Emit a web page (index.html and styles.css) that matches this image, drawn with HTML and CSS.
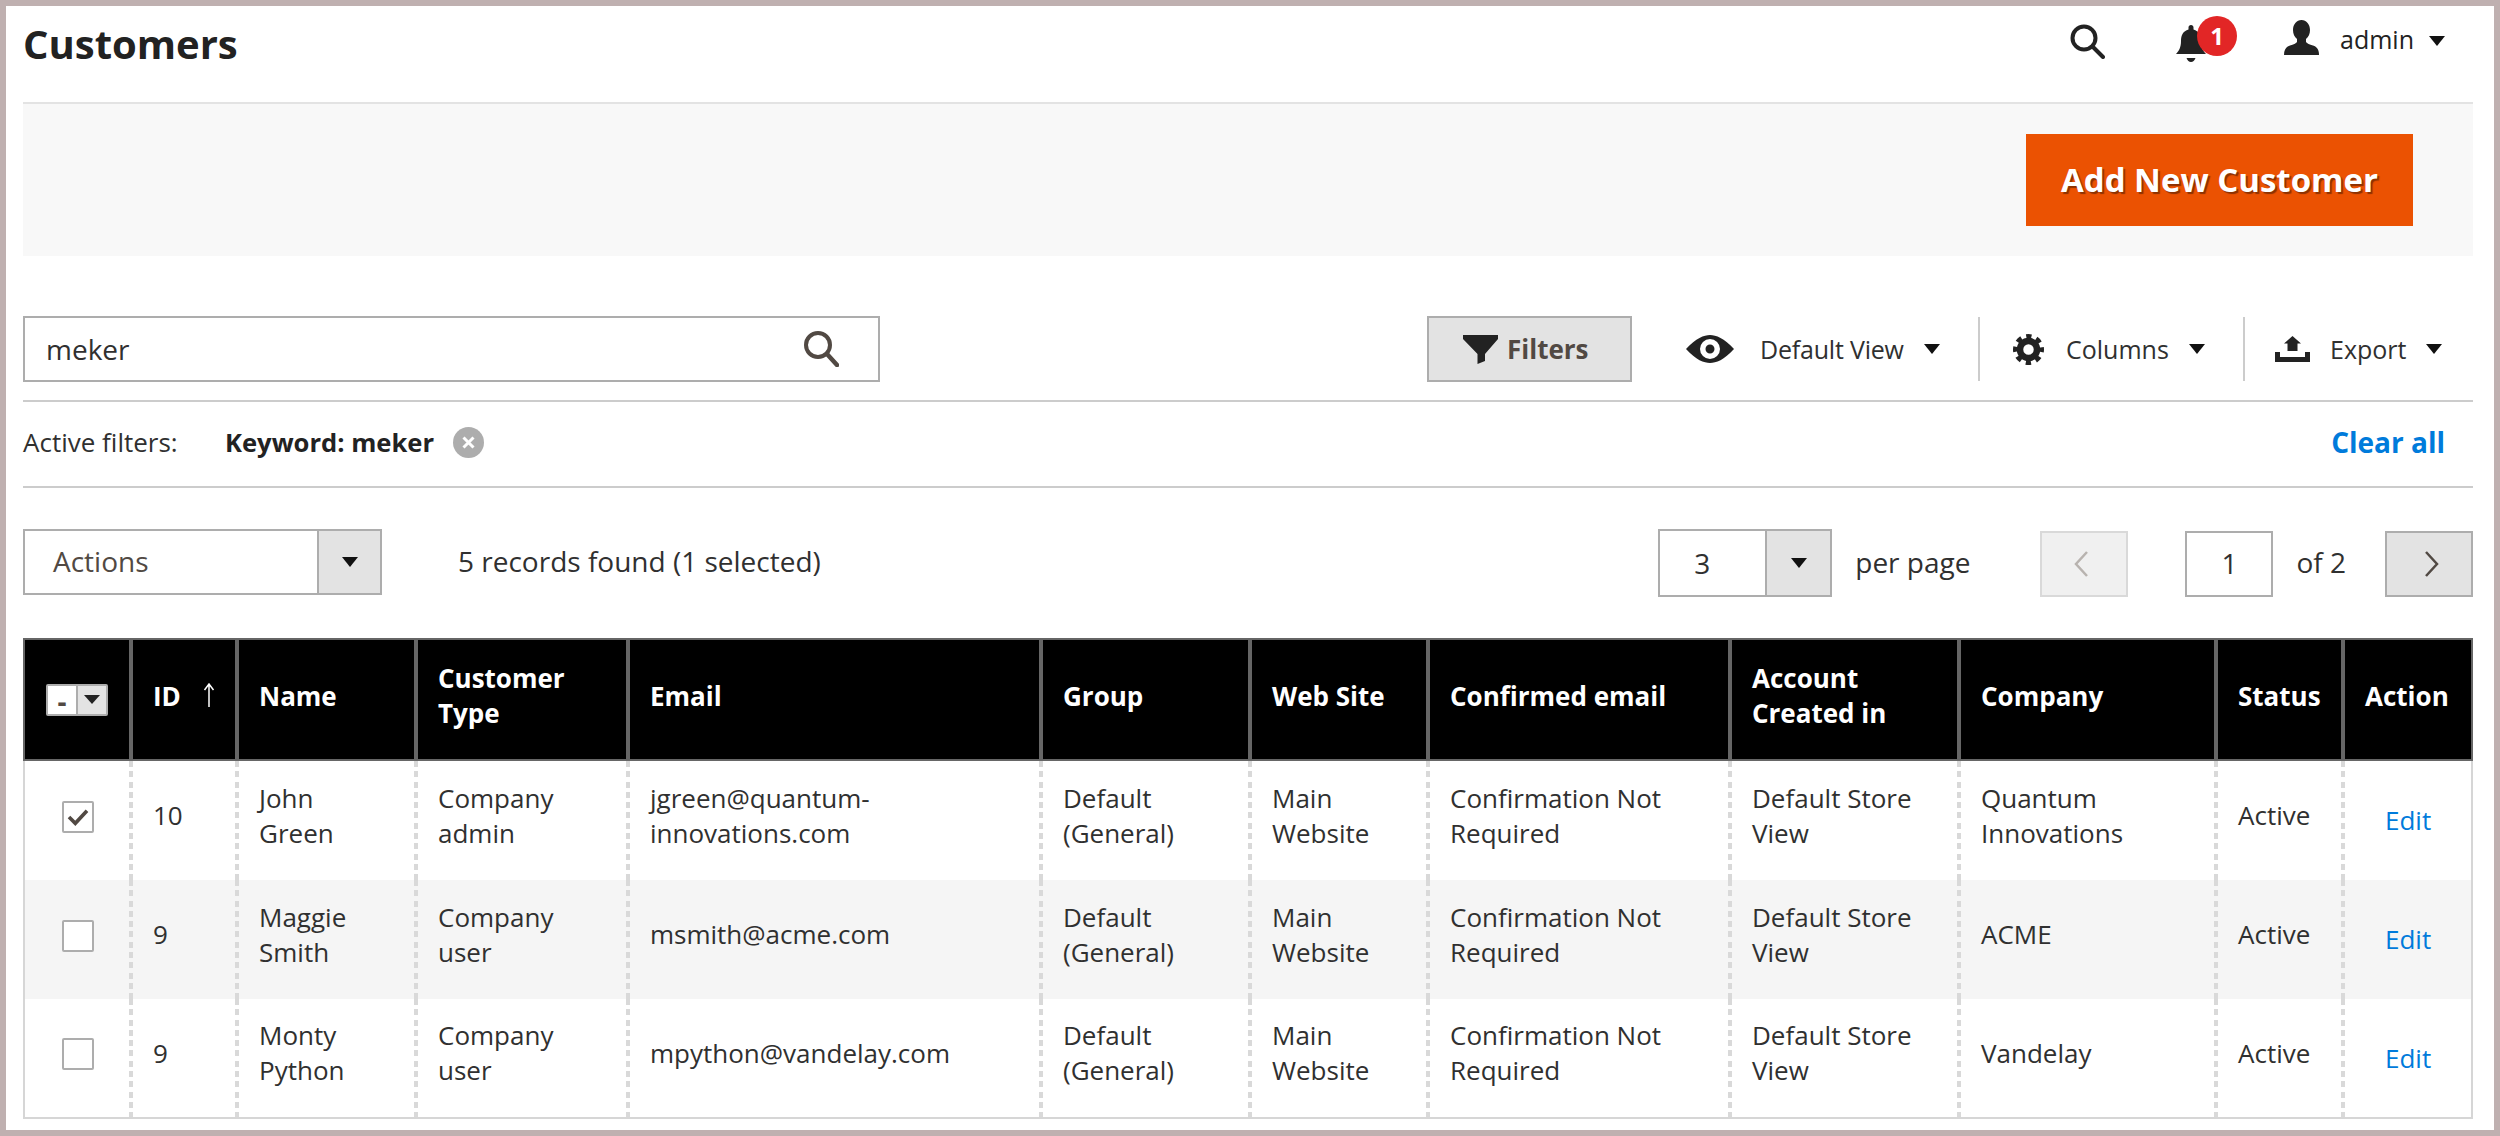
FILE: index.html
```html
<!DOCTYPE html>
<html lang="en">
<head>
    <meta charset="UTF-8">
    <title>Customers</title>
    <link rel="stylesheet" href="styles.css">
</head>
<body>
<div class="frame">
    <header class="page-header">
        <h1>Customers</h1>
        <svg class="top-search" viewBox="0 0 35 35"><circle cx="14" cy="14" r="11.5" fill="none" stroke="#222" stroke-width="4"/><path d="M22.5 22.5 33 33" stroke="#222" stroke-width="4" stroke-linecap="round"/></svg>
        <div class="bell">
            <svg viewBox="0 0 30 37"><path fill="#222" d="M15 0c1.500 0 2.500 1 2.500 2.600V4.500C23 6 25 10.500 25 16c0 6 2 10 5 13H0c3-3 5-7 5-13C5 10.500 7 6 12.500 4.500V2.600C12.500 1 13.500 0 15 0zM10.500 33h9c-1 2.500-2.500 4-4.500 4s-3.500-1.500-4.500-4z"/></svg>
            <span class="badge">1</span>
        </div>
        <svg class="user" viewBox="0 0 35 35"><path fill="#222" d="M17.500 0c5 0 8.500 4.500 8.500 10 0 4-1.500 7-4 9v3c1 1.500 3.500 2.500 7 3.500 4 1.500 6 4 6 9.500H0c0-5.500 2-8 6-9.500 3.500-1 6-2 7-3.500v-3c-2.500-2-4-5-4-9 0-5.500 3.500-10 8.500-10z"/></svg>
        <span class="admin">admin</span>
        <span class="caret"></span>
    </header>

    <div class="page-actions">
        <button class="add-btn" type="button">Add New Customer</button>
    </div>

    <div class="toolbar">
        <div class="search-box">
            <span>meker</span>
            <svg viewBox="0 0 36 36"><circle cx="15" cy="14" r="12" fill="none" stroke="#514943" stroke-width="4"/><path d="M24 23 34 34" stroke="#514943" stroke-width="4.500" stroke-linecap="round"/></svg>
        </div>
        <button class="filters-btn" type="button">
            <svg viewBox="0 0 35 29"><path fill="#222" d="M0 0H35V4L22 19V26L14.500 29V19L0 4Z"/></svg>
            Filters
        </button>
        <div class="tool tool-view">
            <svg class="icon-eye" viewBox="0 0 48 28"><path fill="#222" fill-rule="evenodd" d="M0 14C10 3 18 0 24 0s14 3 24 14C38 25 30 28 24 28S10 25 0 14zM24 4a10 10 0 1 0 0 20 10 10 0 0 0 0-20zm0 5.500a4.500 4.500 0 1 1 0 9 4.500 4.500 0 0 1 0-9z"/></svg>
            <span class="view-name">Default View</span>
            <span class="caret"></span>
        </div>
        <div class="tool tool-columns">
            <svg class="icon-gear" viewBox="0 0 31 31"><circle cx="15.500" cy="15.500" r="8.500" fill="none" stroke="#222" stroke-width="6.500"/><circle cx="15.500" cy="15.500" r="13" fill="none" stroke="#222" stroke-width="5" stroke-dasharray="5.200 5" stroke-dashoffset="2.600"/></svg>
            <span>Columns</span>
            <span class="caret"></span>
        </div>
        <div class="tool tool-export">
            <svg class="icon-export" viewBox="0 0 35 26"><path fill="#222" d="M17.500 0 26 7.500H22.500V15H12.500V7.500H9ZM0 16H5V21H30V16H35V26H0Z"/></svg>
            <span>Export</span>
            <span class="caret"></span>
        </div>
    </div>

    <div class="active-filters">
        <span class="af-label">Active filters:</span>
        <strong class="af-keyword">Keyword: meker</strong>
        <svg class="af-remove" viewBox="0 0 31 31"><circle cx="15.500" cy="15.500" r="15.500" fill="#adadad"/><path d="M10.500 10.500l10 10m0-10-10 10" stroke="#fff" stroke-width="3"/></svg>
        <a class="clear-all" href="#">Clear all</a>
    </div>

    <div class="pager-row">
        <div class="select actions-select">
            <span class="select-value">Actions</span>
            <span class="select-arrow"><span class="caret dark"></span></span>
        </div>
        <span class="records">5 records found (1 selected)</span>
        <div class="select per-page-select">
            <span class="select-value">3</span>
            <span class="select-arrow"><span class="caret dark"></span></span>
        </div>
        <span class="per-page">per page</span>
        <button class="page-btn prev" type="button"><svg viewBox="0 0 16 26"><path d="M14 1 3 13l11 12" fill="none" stroke="#b8b3af" stroke-width="2.500"/></svg></button>
        <span class="page-input">1</span>
        <span class="of-pages">of 2</span>
        <button class="page-btn next" type="button"><svg viewBox="0 0 16 26"><path d="M2 1l11 12L2 25" fill="none" stroke="#514943" stroke-width="2.500"/></svg></button>
    </div>

    <table class="grid">
        <colgroup>
            <col class="c-check"><col class="c-id"><col class="c-name"><col class="c-type"><col class="c-email"><col class="c-group"><col class="c-site"><col class="c-conf"><col class="c-acct"><col class="c-company"><col class="c-status"><col class="c-action">
        </colgroup>
        <thead>
            <tr>
                <th><span class="mass-select"><span class="mass-dash">-</span><span class="mass-arrow"><span class="caret small"></span></span></span></th>
                <th><span class="id-head">ID <svg class="sort-arrow" viewBox="0 0 12 24"><path d="M6 24V2M1.500 7 6 1l4.500 6" fill="none" stroke="#fff" stroke-width="1.500"/></svg></span></th>
                <th>Name</th>
                <th>Customer<br>Type</th>
                <th>Email</th>
                <th>Group</th>
                <th>Web Site</th>
                <th>Confirmed email</th>
                <th>Account<br>Created in</th>
                <th>Company</th>
                <th>Status</th>
                <th>Action</th>
            </tr>
        </thead>
        <tbody>
            <tr>
                <td><span class="check checked"><svg viewBox="0 0 24 20"><path d="M2 10l7 7L22 3" fill="none" stroke="#514943" stroke-width="4"/></svg></span></td>
                <td>10</td>
                <td>John<br>Green</td>
                <td>Company<br>admin</td>
                <td>jgreen@quantum-<br>innovations.com</td>
                <td>Default<br>(General)</td>
                <td>Main<br>Website</td>
                <td>Confirmation Not<br>Required</td>
                <td>Default Store<br>View</td>
                <td>Quantum<br>Innovations</td>
                <td>Active</td>
                <td><a class="edit" href="#">Edit</a></td>
            </tr>
            <tr>
                <td><span class="check"></span></td>
                <td>9</td>
                <td>Maggie<br>Smith</td>
                <td>Company<br>user</td>
                <td>msmith@acme.com</td>
                <td>Default<br>(General)</td>
                <td>Main<br>Website</td>
                <td>Confirmation Not<br>Required</td>
                <td>Default Store<br>View</td>
                <td>ACME</td>
                <td>Active</td>
                <td><a class="edit" href="#">Edit</a></td>
            </tr>
            <tr>
                <td><span class="check"></span></td>
                <td>9</td>
                <td>Monty<br>Python</td>
                <td>Company<br>user</td>
                <td>mpython@vandelay.com</td>
                <td>Default<br>(General)</td>
                <td>Main<br>Website</td>
                <td>Confirmation Not<br>Required</td>
                <td>Default Store<br>View</td>
                <td>Vandelay</td>
                <td>Active</td>
                <td><a class="edit" href="#">Edit</a></td>
            </tr>
        </tbody>
    </table>
</div>
</body>
</html>
```

FILE: styles.css
```css
* {
    box-sizing: border-box;
}
html, body {
    margin: 0;
    height: 1136px;
    overflow: hidden;
}
body {
    font-family: "Open Sans", "Liberation Sans", sans-serif;
    font-size: 28px;
    color: #303030;
    background-color: #fff;
}
svg {
    display: block;
    flex: none;
}
button {
    font-family: inherit;
    border-radius: 0;
    padding: 0;
}
.frame {
    height: 1136px;
    border: 6px solid #bfb0b0;
    padding: 0 21px 0 17px;
}
.caret {
    display: block;
    flex: none;
    width: 0;
    height: 0;
    border-style: solid;
    border-width: 10px 8px 0;
    border-color: #111 transparent transparent;
}
.caret.small {
    border-width: 9px 8px 0;
    border-color: #222 transparent transparent;
}

/* header */
.page-header {
    display: flex;
    align-items: center;
    height: 98px;
    border-bottom: 2px solid #e3e3e3;
}
.page-header h1 {
    margin: 0 auto 20px 0;
    font-size: 40px;
    font-weight: 700;
    line-height: 52px;
    color: #222;
}
.top-search {
    width: 35px;
    height: 35px;
    margin: -26px 71px 0 0;
}
.bell {
    position: relative;
    width: 30px;
    height: 37px;
    margin: -22px 78px 0 0;
}
.bell svg {
    width: 30px;
    height: 37px;
}
.badge {
    position: absolute;
    left: 21px;
    top: -9px;
    width: 40px;
    height: 40px;
    border-radius: 50%;
    background-color: #e22626;
    color: #fff;
    font-size: 24px;
    font-weight: 700;
    line-height: 40px;
    text-align: center;
}
.user {
    width: 35px;
    height: 35px;
    margin: -33px 21px 0 0;
}
.admin {
    margin: -31px 15px 0 0;
    font-size: 25px;
    line-height: 36px;
    color: #222;
}
.page-header .caret {
    margin: -26px 28px 0 0;
}

/* orange button panel */
.page-actions {
    display: flex;
    justify-content: flex-end;
    align-items: center;
    height: 152px;
    padding-right: 60px;
    background-color: #f8f8f8;
}
.add-btn {
    width: 387px;
    height: 92px;
    padding-bottom: 2px;
    border: none;
    background-color: #eb5202;
    color: #fff;
    font-size: 33px;
    font-weight: 700;
    text-shadow: 2px 2px 1px rgba(0, 0, 0, 0.4);
}

/* search and view tools */
.toolbar {
    display: flex;
    align-items: center;
    height: 86px;
    margin-top: 60px;
    padding-bottom: 18px;
    border-bottom: 2px solid #ccc;
}
.search-box {
    display: flex;
    align-items: center;
    justify-content: space-between;
    width: 857px;
    height: 66px;
    padding: 0 39px 0 21px;
    border: 2px solid #adadad;
    font-size: 28px;
}
.search-box svg {
    width: 36px;
    height: 36px;
}
.filters-btn {
    display: flex;
    align-items: center;
    width: 205px;
    height: 66px;
    margin-left: 547px;
    padding-left: 34px;
    border: 2px solid #adadad;
    background-color: #e3e3e3;
    color: #514943;
    font-size: 26px;
    font-weight: 700;
}
.filters-btn svg {
    width: 35px;
    height: 29px;
    margin-right: 9px;
}
.tool {
    display: flex;
    align-items: center;
    height: 64px;
    font-size: 25px;
    color: #303030;
}
.tool-view {
    width: 348px;
    padding-left: 54px;
    border-right: 2px solid #ccc;
}
.view-name {
    letter-spacing: -0.2px;
}
.tool-columns {
    width: 265px;
    padding-left: 33px;
    border-right: 2px solid #ccc;
}
.tool-export {
    padding-left: 30px;
}
.tool .caret {
    margin-left: 20px;
}
.icon-eye {
    width: 48px;
    height: 28px;
    margin-right: 26px;
}
.icon-gear {
    width: 31px;
    height: 31px;
    margin-right: 22px;
}
.icon-export {
    width: 35px;
    height: 26px;
    margin-right: 20px;
}

/* active filters */
.active-filters {
    display: flex;
    align-items: center;
    height: 86px;
    border-bottom: 2px solid #ccc;
    padding: 0 28px 4px 0;
    font-size: 26px;
}
.af-label {
    width: 202px;
}
.af-keyword {
    color: #222;
    font-size: 25.600px;
}
.af-remove {
    width: 31px;
    height: 31px;
    margin-left: 19px;
}
.clear-all {
    margin-left: auto;
    font-size: 28px;
    font-weight: 700;
    color: #007bdb;
    text-decoration: none;
}

/* actions and pager */
.pager-row {
    display: flex;
    align-items: flex-start;
    height: 68px;
    margin-top: 41px;
}
.select {
    display: flex;
    height: 66px;
    border: 2px solid #adadad;
}
.select-value {
    flex: 1;
    line-height: 60px;
}
.select-arrow {
    display: flex;
    align-items: center;
    justify-content: center;
    border-left: 2px solid #adadad;
    background-color: #e3e3e3;
}
.actions-select {
    width: 359px;
}
.actions-select .select-value {
    padding-left: 28px;
    color: #514943;
}
.actions-select .select-arrow {
    width: 63px;
}
.records {
    margin-left: 76px;
    line-height: 64px;
}
.per-page-select {
    width: 174px;
    height: 68px;
    margin-left: auto;
}
.per-page-select .select-value {
    padding-left: 34px;
    line-height: 64px;
}
.per-page-select .select-arrow {
    width: 65px;
}
.per-page {
    margin-left: 23px;
    line-height: 66px;
}
.page-btn {
    display: flex;
    align-items: center;
    justify-content: center;
    width: 88px;
    height: 66px;
    margin-top: 2px;
}
.page-btn svg {
    width: 16px;
    height: 26px;
}
.prev {
    margin-left: 70px;
    padding-right: 6px;
    border: 2px solid #d9d9d9;
    background-color: #f0f0f0;
}
.next {
    margin-left: 39px;
    padding-left: 6px;
    border: 2px solid #adadad;
    background-color: #e3e3e3;
}
.page-input {
    width: 88px;
    height: 66px;
    margin: 2px 0 0 57px;
    border: 2px solid #adadad;
    line-height: 60px;
    text-align: center;
}
.of-pages {
    margin-left: 23px;
    line-height: 66px;
}

/* grid */
.grid {
    width: 2450px;
    margin-top: 41px;
    border-collapse: separate;
    border-spacing: 0;
    table-layout: fixed;
    font-size: 26px;
    line-height: 35px;
}
.c-check { width: 110px; }
.c-id { width: 106px; }
.c-name { width: 179px; }
.c-type { width: 212px; }
.c-email { width: 413px; }
.c-group { width: 209px; }
.c-site { width: 178px; }
.c-conf { width: 302px; }
.c-acct { width: 229px; }
.c-company { width: 257px; }
.c-status { width: 127px; }
.c-action { width: 128px; }
.grid th {
    height: 123px;
    padding: 0 20px 7px 20px;
    background-color: #000;
    border-top: 2px solid #666;
    border-bottom: 2px solid #666;
    border-right: 4px solid #666;
    color: #fff;
    font-size: 26px;
    font-weight: 700;
    text-align: left;
    vertical-align: middle;
}
.grid th:first-child {
    border-left: 2px solid #666;
    padding: 0;
}
.grid th:last-child {
    border-right: 2px solid #666;
}
.id-head {
    display: flex;
    align-items: center;
    gap: 22px;
}
.sort-arrow {
    width: 12px;
    height: 24px;
    margin-top: -3px;
}
.mass-select {
    display: flex;
    width: 62px;
    height: 32px;
    margin: 0 0 0 21px;
    border: 2px solid #adadad;
    border-radius: 2px;
    background-color: #fff;
}
.mass-dash {
    flex: 1;
    color: #514943;
    font-size: 28px;
    font-weight: 700;
    line-height: 30px;
    text-align: center;
}
.mass-arrow {
    display: flex;
    align-items: center;
    justify-content: center;
    width: 30px;
    border-left: 2px solid #adadad;
    background-color: #e3e3e3;
}
.grid td {
    height: 119px;
    padding: 0 20px 10px 20px;
    background-image: repeating-linear-gradient(#d9d9d9 0 6px, transparent 6px 10.300px);
    background-repeat: no-repeat;
    background-size: 4px 100%;
    background-position: right top;
    vertical-align: middle;
}
.grid td:first-child {
    padding: 0 0 8px 37px;
    border-left: 2px solid #d6d6d6;
}
.grid td:last-child {
    padding: 0;
    background-image: none;
    border-right: 2px solid #d6d6d6;
}
.grid tbody tr:nth-child(2) td {
    background-color: #f5f5f5;
}
.grid tbody tr:last-child td {
    height: 120px;
    border-bottom: 2px solid #d6d6d6;
}
.check {
    display: flex;
    align-items: center;
    justify-content: center;
    width: 32px;
    height: 32px;
    border: 2px solid #adadad;
    border-radius: 2px;
    background-color: #fff;
}
.check svg {
    width: 22px;
    height: 18px;
}
.edit {
    margin-left: 40px;
    color: #007bdb;
    text-decoration: none;
}
```
